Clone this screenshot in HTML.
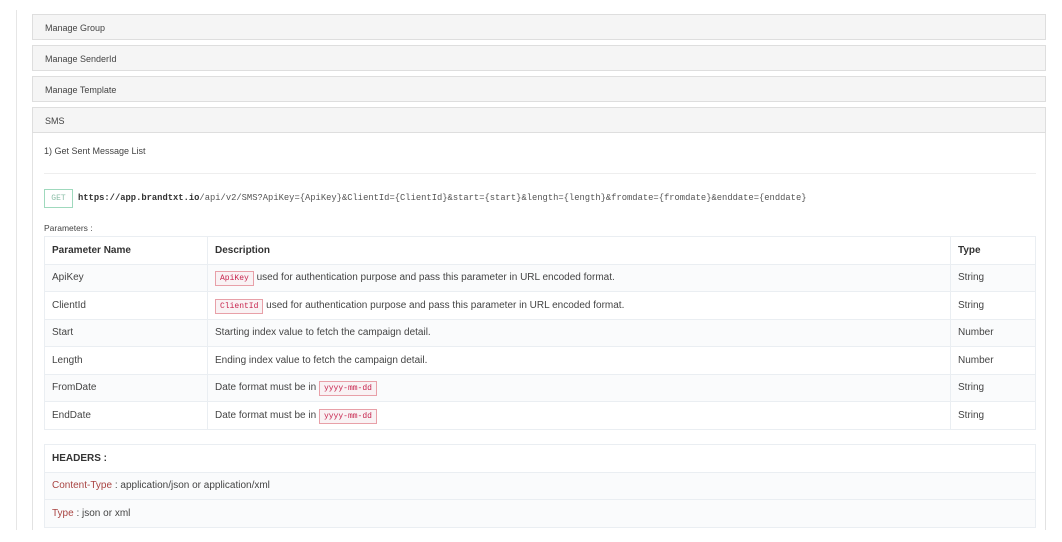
<!DOCTYPE html>
<html><head><style>
body{margin:0;background:#fff;font-family:"Liberation Sans",sans-serif;color:#333;width:1062px;height:542px;overflow:hidden;position:relative}
.vl{position:absolute;left:16px;top:10px;width:1px;height:520px;background:#e6e6e6}
.ph{position:absolute;left:32px;width:1014px;height:26px;background:#f5f5f5;border:1px solid #dedede;font-size:9px;line-height:26px;padding-left:12px;box-sizing:border-box;color:#444}
.body{position:absolute;left:32px;top:133px;width:1014px;height:397px;border-left:1px solid #e2e2e2;border-right:1px solid #e2e2e2;box-sizing:border-box}
.t{position:absolute;font-size:9px;color:#444}
.hr{position:absolute;left:44px;top:173px;width:992px;height:1px;background:#eee}
.get{position:absolute;left:44px;top:189px;width:29px;height:19px;border:1px solid #9fd9bd;box-sizing:border-box;color:#8cbfa8;font-family:"Liberation Mono",monospace;font-size:8px;line-height:17px;text-align:center}
.url{position:absolute;left:78px;top:193px;font-family:"Liberation Mono",monospace;font-size:8.8px;color:#555;white-space:nowrap}
.url b{color:#333}
table{position:absolute;left:44px;border-collapse:collapse;font-size:10px;color:#444}
td,th{border:1px solid #eaeef2;padding:0 7px;text-align:left;height:27.5px;box-sizing:border-box}
th{font-weight:bold;color:#333}
tr.s td{background:#fafbfc}
code{font-family:"Liberation Mono",monospace;font-size:8px;color:#c7254e;background:#f9f2f4;border:1px solid #e8a0a8;padding:2px 4px}
.k{color:#a94442}
</style></head><body>
<div class="vl"></div>
<div class="ph" style="top:14px">Manage Group</div>
<div class="ph" style="top:45px">Manage SenderId</div>
<div class="ph" style="top:76px">Manage Template</div>
<div class="ph" style="top:107px">SMS</div>
<div class="body"></div>
<div class="t" style="left:44px;top:146px">1) Get Sent Message List</div>
<div class="hr"></div>
<div class="get">GET</div>
<div class="url"><b>https://app.brandtxt.io</b>/api/v2/SMS?ApiKey={ApiKey}&amp;ClientId={ClientId}&amp;start={start}&amp;length={length}&amp;fromdate={fromdate}&amp;enddate={enddate}</div>
<div class="t" style="left:44px;top:223px;font-size:8.5px">Parameters :</div>
<table style="top:236px;width:992px">
<tr><th style="width:163px">Parameter Name</th><th>Description</th><th style="width:85px">Type</th></tr>
<tr class="s"><td>ApiKey</td><td><code>ApiKey</code> used for authentication purpose and pass this parameter in URL encoded format.</td><td>String</td></tr>
<tr><td>ClientId</td><td><code>ClientId</code> used for authentication purpose and pass this parameter in URL encoded format.</td><td>String</td></tr>
<tr class="s"><td>Start</td><td>Starting index value to fetch the campaign detail.</td><td>Number</td></tr>
<tr><td>Length</td><td>Ending index value to fetch the campaign detail.</td><td>Number</td></tr>
<tr class="s"><td>FromDate</td><td>Date format must be in <code>yyyy-mm-dd</code></td><td>String</td></tr>
<tr><td>EndDate</td><td>Date format must be in <code>yyyy-mm-dd</code></td><td>String</td></tr>
</table>
<table style="top:444px;width:992px">
<tr><th>HEADERS :</th></tr>
<tr class="s"><td><span class="k">Content-Type</span> : application/json or application/xml</td></tr>
<tr class="s"><td><span class="k">Type</span> : json or xml</td></tr>
</table>
</body></html>
